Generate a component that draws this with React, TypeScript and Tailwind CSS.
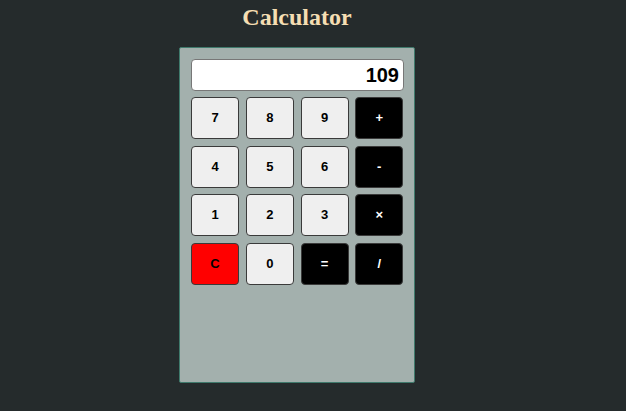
import { useState } from 'react'

const keys = ['7', '8', '9', '+', '4', '5', '6', '-', '1', '2', '3', '×', 'C', '0', '=', '/']

const App = () => {
  const [display] = useState('109')

  const keyStyle = (k: string) => {
    if (k === 'C') return 'bg-[#ff0000] text-black'
    if (['+', '-', '×', '=', '/'].includes(k)) return 'bg-black text-white'
    return 'bg-[#efefef] text-black'
  }

  return (
    <main className="min-h-screen w-full bg-[#252b2c]">
      <div className="w-[594px] flex flex-col items-center">
        <h1 className="mt-[2px] text-[24px] leading-[30px] font-bold text-[#f5deb3] [font-family:'Liberation_Serif',serif]">
          Calculator
        </h1>
        <div className="mt-[15px] w-[236px] h-[336px] bg-[#a3b0ad] border border-[#3f7a6c] rounded-[2px] px-[11px] pt-[11px] [font-family:'Liberation_Sans',Arial,sans-serif]">
          <div className="h-[32px] w-[213px] bg-white border border-[#777] rounded-[4px] flex items-center justify-end pr-[4px] text-[20px] font-bold text-black">
            {display}
          </div>
          <div className="mt-[6px] grid grid-cols-4 gap-x-[7px] gap-y-[6.5px] w-[212px]">
            {keys.map((k) => (
              <button
                key={k}
                className={`h-[42px] w-[48px] rounded-[4px] border border-[#3a3a3a] text-[13px] font-bold flex items-center justify-center ${keyStyle(k)}`}
              >
                {k}
              </button>
            ))}
          </div>
        </div>
      </div>
    </main>
  )
}

export default App
